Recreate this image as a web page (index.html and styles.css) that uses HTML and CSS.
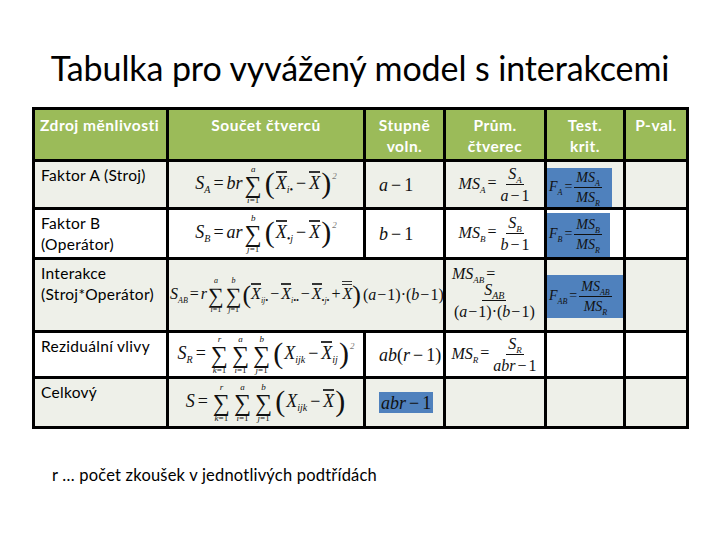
FILE: index.html
```html
<!DOCTYPE html>
<html lang="cs">
<head>
<meta charset="utf-8">
<link rel="stylesheet" href="styles.css">
</head>
<body>
<div class="slide">
  <h1 class="title">Tabulka pro vyvážený model s interakcemi</h1>
  <div class="grid">
    <!-- header -->
    <div class="h left">Zdroj měnlivosti</div>
    <div class="h">Součet čtverců</div>
    <div class="h">Stupně<br>voln.</div>
    <div class="h">Prům.<br>čtverec</div>
    <div class="h">Test.<br>krit.</div>
    <div class="h">P-val.</div>

    <!-- row 1 -->
    <div class="c lbl alt">Faktor A (Stroj)</div>
    <div class="c fm alt"><span class="m"><i>S</i><sub>A</sub><b class="op">=</b><i>br</i><span class="sum"><span class="lim">a</span><span class="sig">∑</span><span class="lim">i<b>=1</b></span></span><span class="bp">(</span><span class="ob">X</span><sub>i•</sub><b class="op">−</b><span class="ob">X</span><span class="bp">)</span><sup>2</sup></span></div>
    <div class="c df alt"><span class="m">a<b class="op">−</b><b>1</b></span></div>
    <div class="c fm alt"><span class="m md">MS<sub>A</sub><b class="op">=</b><span class="fr"><span class="nu">S<sub>A</sub></span><span class="de">a<b class="op">−</b><b>1</b></span></span></span></div>
    <div class="c tk alt"><div class="blue b1"><span class="m sm">F<sub>A</sub><b class="op">=</b><span class="fr"><span class="nu">MS<sub>A</sub></span><span class="de">MS<sub>R</sub></span></span></span></div></div>
    <div class="c alt"></div>

    <!-- row 2 -->
    <div class="c lbl">Faktor B<br>(Operátor)</div>
    <div class="c fm"><span class="m"><i>S</i><sub>B</sub><b class="op">=</b><i>ar</i><span class="sum"><span class="lim">b</span><span class="sig">∑</span><span class="lim">j<b>=1</b></span></span><span class="bp">(</span><span class="ob">X</span><sub>•j</sub><b class="op">−</b><span class="ob">X</span><span class="bp">)</span><sup>2</sup></span></div>
    <div class="c df"><span class="m">b<b class="op">−</b><b>1</b></span></div>
    <div class="c fm"><span class="m md">MS<sub>B</sub><b class="op">=</b><span class="fr"><span class="nu">S<sub>B</sub></span><span class="de">b<b class="op">−</b><b>1</b></span></span></span></div>
    <div class="c tk"><div class="blue b2"><span class="m sm">F<sub>B</sub><b class="op">=</b><span class="fr"><span class="nu">MS<sub>B</sub></span><span class="de">MS<sub>R</sub></span></span></span></div></div>
    <div class="c"></div>

    <!-- row 3 -->
    <div class="c lbl alt">Interakce<br>(Stroj*Operátor)</div>
    <div class="c fm alt over"><span class="m xs"><i>S</i><sub>AB</sub><b class="op n">=</b><i>r</i><span class="sum"><span class="lim">a</span><span class="sig">∑</span><span class="lim">i<b>=1</b></span></span><span class="sum"><span class="lim">b</span><span class="sig">∑</span><span class="lim">j<b>=1</b></span></span><span class="bp">(</span><span class="ob">X</span><sub>ij•</sub><b class="op n">−</b><span class="ob">X</span><sub>i••</sub><b class="op n">−</b><span class="ob">X</span><sub>•j•</sub><b class="op n">+</b><span class="ob dbl">X</span><span class="bp">)</span></span></div>
    <div class="c df alt neg"><span class="m tight"><b>(</b>a<b class="op">−</b><b>1)·(</b>b<b class="op">−</b><b>1)</b></span></div>
    <div class="c fm col alt"><span class="m md">MS<sub>AB</sub><b class="op">=</b></span><span class="m tight"><span class="fr"><span class="nu">S<sub>AB</sub></span><span class="de"><b>(</b>a<b class="op">−</b><b>1)·(</b>b<b class="op">−</b><b>1)</b></span></span></span></div>
    <div class="c tk alt top"><div class="blue b3"><span class="m sm">F<sub>AB</sub><b class="op">=</b><span class="fr"><span class="nu">MS<sub>AB</sub></span><span class="de">MS<sub>R</sub></span></span></span></div></div>
    <div class="c alt"></div>

    <!-- row 4 -->
    <div class="c lbl">Reziduální vlivy</div>
    <div class="c fm"><span class="m"><i>S</i><sub>R</sub><b class="op">=</b><span class="sum"><span class="lim">r</span><span class="sig">∑</span><span class="lim">k<b>=1</b></span></span><span class="sum"><span class="lim">a</span><span class="sig">∑</span><span class="lim">i<b>=1</b></span></span><span class="sum"><span class="lim">b</span><span class="sig">∑</span><span class="lim">j<b>=1</b></span></span><span class="bp">(</span>X<sub>ijk</sub><b class="op">−</b><span class="ob">X</span><sub>ij</sub><span class="bp">)</span><sup>2</sup></span></div>
    <div class="c df"><span class="m">ab<b>(</b>r<b class="op">−</b><b>1)</b></span></div>
    <div class="c fm"><span class="m md">MS<sub>R</sub><b class="op">=</b><span class="fr"><span class="nu">S<sub>R</sub></span><span class="de">abr<b class="op">−</b><b>1</b></span></span></span></div>
    <div class="c"></div>
    <div class="c"></div>

    <!-- row 5 -->
    <div class="c lbl alt">Celkový</div>
    <div class="c fm alt"><span class="m"><i>S</i><b class="op">=</b><span class="sum"><span class="lim">r</span><span class="sig">∑</span><span class="lim">k<b>=1</b></span></span><span class="sum"><span class="lim">a</span><span class="sig">∑</span><span class="lim">i<b>=1</b></span></span><span class="sum"><span class="lim">b</span><span class="sig">∑</span><span class="lim">j<b>=1</b></span></span><span class="bp">(</span>X<sub>ijk</sub><b class="op">−</b><span class="ob">X</span><span class="bp">)</span></span></div>
    <div class="c df alt"><span class="m hl">abr<b class="op">−</b><b>1</b></span></div>
    <div class="c alt"></div>
    <div class="c alt"></div>
    <div class="c alt"></div>
  </div>
  <p class="note">r … počet zkoušek v jednotlivých podtřídách</p>
</div>
</body>
</html>
```

FILE: styles.css
```css
* { box-sizing: border-box; }
body { margin: 0; background: #fff; }
.slide {
  width: 720px; height: 540px; background: #fff;
  display: flex; flex-direction: column; align-items: flex-start;
  font-family: Lato, "Open Sans", sans-serif; color: #000;
}
.title {
  align-self: center; margin: 47px 0 0 0;
  font-size: 34px; font-weight: 400; line-height: 41px; letter-spacing: -0.1px;
}
.grid {
  margin: 19px 0 0 32px;
  display: grid;
  grid-template-columns: 131px 194px 77px 98px 76px 60px;
  grid-template-rows: 49px 45px 47px 70px 43px 47px;
  gap: 3px; padding: 3px; background: #000;
}
.h {
  background: #9bbb59; color: #fff; font-weight: 700;
  font-size: 15.5px; letter-spacing: 0.5px; line-height: 21px; text-align: center; padding-top: 5px;
  white-space: nowrap;
}
.h.left { text-align: left; padding-left: 5px; }
.c { background: #fff; min-width: 0; }
.c.alt { background: #eef0e9; }
.lbl { font-size: 15.5px; letter-spacing: 0.3px; line-height: 21px; padding: 3px 0 0 6px; white-space: nowrap; }
.fm { display: flex; align-items: center; justify-content: center; }
.fm.col { flex-direction: column; align-items: flex-start; justify-content: flex-start; padding: 6px 0 0 6px; }
.df { display: flex; align-items: center; padding-left: 13px; }
.df.neg { padding-left: 0; margin-left: -3px; }
.tk { display: flex; align-items: flex-end; }
.tk.top { align-items: flex-start; }
.over { justify-content: flex-start; padding-left: 1px; overflow: visible; }

.m {
  font-family: "Liberation Serif", "Times New Roman", serif; font-style: italic;
  font-size: 18px; line-height: 1; white-space: nowrap; color: #111;
}
.m i { font-style: italic; }
.m b { font-weight: 400; font-style: normal; }
.m .op { margin: 0 3px; }
.m .op.n { margin: 0 2px; }
.m sub { font-size: 10px; vertical-align: -4px; line-height: 0; }
.m sup { font-size: 9px; vertical-align: 10px; line-height: 0; color: #777; }
.m.md { font-size: 16px; }
.m.md sub { font-size: 9px; }
.m.md .op { margin: 0 2px; }
.m.tight { font-size: 16px; }
.m.tight .op { margin: 0 1px; }
.m.sm { font-size: 14px; }
.m.sm sub { font-size: 8px; }
.m.sm .op { margin: 0 2px; }
.m.xs { font-size: 16px; }
.m.xs sub { font-size: 8px; }

.sum { display: inline-flex; flex-direction: column; align-items: center; vertical-align: middle; margin: 0 2px; }
.sum .lim { font-size: 9px; line-height: 9px; }
.sum .sig { font-style: normal; font-size: 24px; line-height: 22px; }
.xs .sum { margin: 0 1px; }
.xs .sum .lim { font-size: 8px; line-height: 8px; }
.xs .sum .sig { font-size: 22px; line-height: 21px; }

.bp { font-style: normal; font-size: 30px; vertical-align: -4px; line-height: 0; margin: 0 1px; }
.xs .bp { font-size: 26px; margin: 0; }
.ob { display: inline-block; border-top: 2px solid #333; padding-top: 1px; line-height: 1; }
.ob.dbl { border-top: 4px double #333; }

.fr { display: inline-flex; flex-direction: column; align-items: center; vertical-align: middle; }
.fr .nu { border-bottom: 1px solid #111; padding: 0 2px 2px; }
.fr .de { padding: 3px 2px 0; }

.blue { background: #4f81bd; display: flex; align-items: center; padding-left: 2px; }
.b1 { width: 65px; height: 39px; }
.b2 { width: 63px; height: 44px; }
.b3 { width: 76px; height: 43px; margin-top: 15px; }
.hl { background: #4f81bd; padding: 2px 2px 1px; }

.note { margin: 36px 0 0 52px; font-size: 16.5px; letter-spacing: 0.2px; line-height: 20px; }
```
